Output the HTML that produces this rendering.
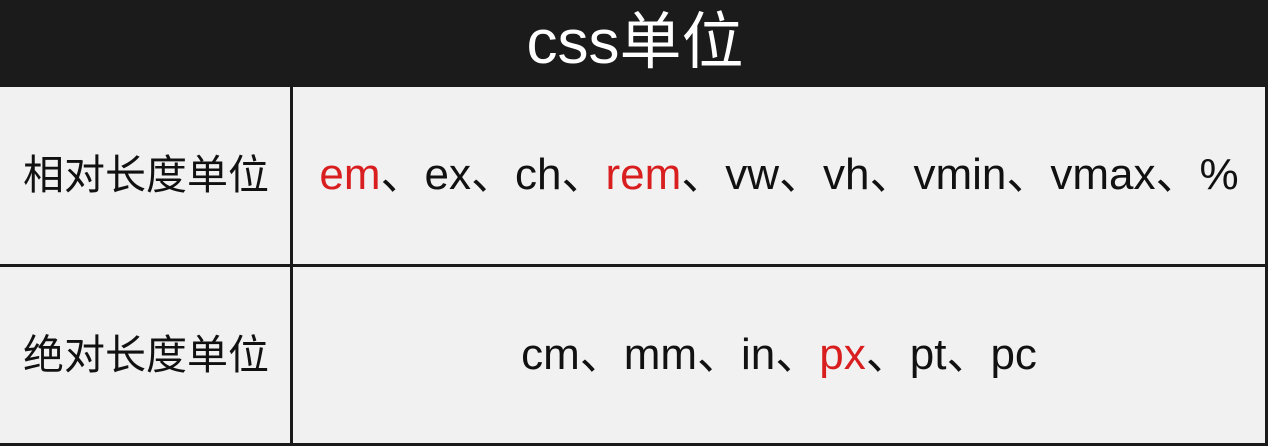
<!DOCTYPE html>
<html><head><meta charset="utf-8"><style>
html,body{margin:0;padding:0;width:1268px;height:446px;background:#f1f1f1;overflow:hidden;font-family:"Liberation Sans","Noto Sans CJK SC",sans-serif;color:#111}
.hd{position:absolute;left:0;top:0;width:1268px;height:85px;background:#1b1b1b;color:#fff;font-size:62px;line-height:85px;text-align:center;padding-left:2px;box-sizing:border-box}
.h{position:absolute;left:0;width:1268px;height:3px;background:#1a1a1a}
.v{position:absolute;top:85px;width:3px;height:361px;background:#1a1a1a}
.t{position:absolute;font-size:44px;line-height:50px;white-space:nowrap}
.l{font-size:41px}
.r{color:#d81e1e}
</style></head><body>
<div class="hd">css单位</div>
<div class="h" style="top:84px"></div>
<div class="h" style="top:264px"></div>
<div class="h" style="top:443px"></div>
<div class="v" style="left:290px"></div>
<div class="v" style="left:1265px"></div>
<div class="t l" style="left:20px;top:150px;width:252px;text-align:center">相对长度单位</div>
<div class="t l" style="left:20px;top:330px;width:252px;text-align:center">绝对长度单位</div>
<div class="t" style="left:293px;top:150px;width:972px;text-align:center"><span class="r">em</span>、ex、ch、<span class="r">rem</span>、vw、vh、vmin、vmax、%</div>
<div class="t" style="left:293px;top:330px;width:972px;text-align:center">cm、mm、in、<span class="r">px</span>、pt、pc</div>
</body></html>
